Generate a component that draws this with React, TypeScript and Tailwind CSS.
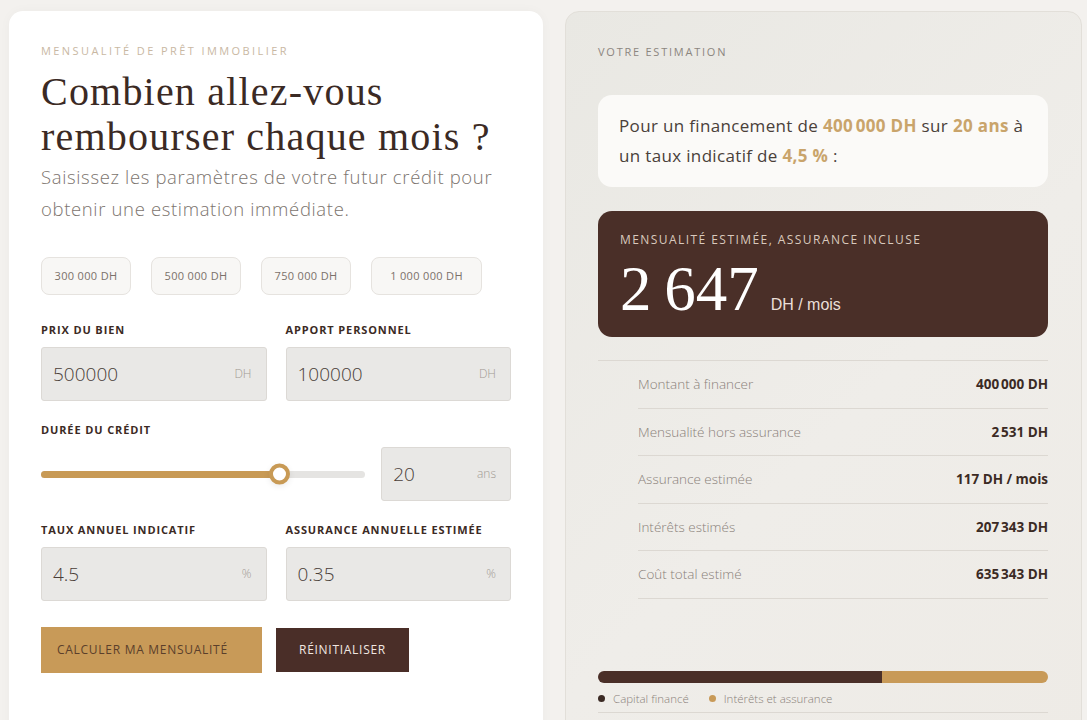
import React from "react";

const sans = "font-['Open_Sans','Noto_Sans',sans-serif]";
const serif = "font-['Liberation_Serif','DejaVu_Serif',serif]";

const chips: [string, string][] = [
  ["300 000 DH", "w-[90px]"],
  ["500 000 DH", "w-[90px]"],
  ["750 000 DH", "w-[90px]"],
  ["1 000 000 DH", "w-[111px]"],
];

const nb = "\u202f";

const rows: [string, string][] = [
  ["Montant à financer", `400${nb}000 DH`],
  ["Mensualité hors assurance", `2${nb}531 DH`],
  ["Assurance estimée", "117 DH / mois"],
  ["Intérêts estimés", `207${nb}343 DH`],
  ["Coût total estimé", `635${nb}343 DH`],
];

function Label({ children }: { children: React.ReactNode }) {
  return (
    <div className="text-[11px] font-bold tracking-[0.08em] text-[#3b2a24] leading-none mb-[12px]">
      {children}
    </div>
  );
}

function Field({ value, unit, className = "" }: { value: string; unit: string; className?: string }) {
  return (
    <div
      className={`flex h-[54px] items-center justify-between rounded-[3px] border border-[#dcd9d5] bg-[#e9e8e6] pl-[11px] pr-[14px] ${className}`}
    >
      <span className="text-[19px] font-light text-[#4a3e38]">{value}</span>
      <span className="text-[12px] font-light text-[#a29a93]">{unit}</span>
    </div>
  );
}

export default function App() {
  return (
    <div className={`${sans} h-[720px] w-[1087px] overflow-hidden bg-[#f3f1ee] pt-[11px] pl-[9px] flex gap-[22px]`}>
      {/* Formulaire */}
      <div className="w-[534px] h-[740px] shrink-0 rounded-[14px] bg-white pl-[32px] pr-[32px] pt-[34px] shadow-[0_0_12px_rgba(0,0,0,0.03)]">
        <div className="text-[11px] tracking-[0.22em] text-[#c9b8a3] leading-none">
          MENSUALITÉ DE PRÊT IMMOBILIER
        </div>
        <h1 className={`${serif} mt-[13px] text-[40px] leading-[45px] tracking-[0.03em] text-[#3b2a24]`}>
          Combien allez-vous
          <br />
          rembourser chaque mois ?
        </h1>
        <p className="mt-[2px] text-[18.5px] font-light leading-[32px] tracking-[0.035em] text-[#7c746e]">
          Saisissez les paramètres de votre futur crédit pour obtenir une estimation immédiate.
        </p>

        <div className="mt-[32px] flex gap-[20px]">
          {chips.map(([c, w]) => (
            <div
              key={c}
              className={`flex h-[38px] ${w} items-center justify-center rounded-[8px] border border-[#e6e3df] bg-[#f8f7f5] text-[11px] tracking-[0.03em] text-[#7b716a]`}
            >
              {c}
            </div>
          ))}
        </div>

        <div className="mt-[29px] grid grid-cols-2 gap-x-[19px]">
          <div>
            <Label>PRIX DU BIEN</Label>
            <Field value="500000" unit="DH" />
          </div>
          <div>
            <Label>APPORT PERSONNEL</Label>
            <Field value="100000" unit="DH" />
          </div>
        </div>

        <div className="mt-[23px]">
          <Label>DURÉE DU CRÉDIT</Label>
          <div className="flex items-center gap-[16px]">
            <div className="relative h-[7px] w-[325px] rounded-full bg-[#e5e4e2]">
              <div className="h-full w-[238px] rounded-full bg-[#c89a55]" />
              <div className="absolute left-[228px] top-1/2 h-[21px] w-[21px] -translate-y-1/2 rounded-full border-[4px] border-[#c89a55] bg-white shadow-[0_2px_6px_rgba(0,0,0,0.08)]" />
            </div>
            <Field value="20" unit="ans" className="w-[130px]" />
          </div>
        </div>

        <div className="mt-[23px] grid grid-cols-2 gap-x-[19px]">
          <div>
            <Label>TAUX ANNUEL INDICATIF</Label>
            <Field value="4.5" unit="%" />
          </div>
          <div>
            <Label>ASSURANCE ANNUELLE ESTIMÉE</Label>
            <Field value="0.35" unit="%" />
          </div>
        </div>

        <div className="mt-[26px] flex items-center gap-[14px]">
          <button className="h-[46px] w-[221px] bg-[#c89a58] pl-[16px] text-left text-[12px] tracking-[0.06em] text-[#5b3f2b]">
            CALCULER MA MENSUALITÉ
          </button>
          <button className="h-[44px] w-[133px] bg-[#4a2e28] text-[12px] tracking-[0.06em] text-[#f1e7e1]">
            RÉINITIALISER
          </button>
        </div>
      </div>

      {/* Estimation */}
      <div className="w-[517px] h-[740px] shrink-0 rounded-[14px] border border-[#e2dfd9] bg-[linear-gradient(135deg,#e9e8e3_0%,#efede9_55%,#eeebe6_100%)] pl-[32px] pr-[33px] pt-[34px]">
        <div className="text-[11px] tracking-[0.16em] text-[#8c867f] leading-none">VOTRE ESTIMATION</div>

        <div className="mt-[38px] rounded-[14px] bg-[#fbfaf8] px-[21px] py-[16px] text-[17px] leading-[30px] tracking-[0.02em] text-[#4a403a]">
          Pour un financement de <b className="font-bold text-[#c9a46b]">400{nb}000 DH</b> sur{" "}
          <b className="font-bold text-[#c9a46b]">20 ans</b> à un taux indicatif de{" "}
          <b className="font-bold text-[#c9a46b]">4,5 %</b> :
        </div>

        <div className="mt-[24px] h-[126px] rounded-[14px] bg-[#4a2f28] px-[22px] pt-[23px]">
          <div className="text-[12px] tracking-[0.12em] text-[#d9c9bd] leading-none">
            MENSUALITÉ ESTIMÉE, ASSURANCE INCLUSE
          </div>
          <div className="mt-[8px] flex items-baseline gap-[12px]">
            <span className={`${serif} text-[63px] leading-[70px] text-white`}>2{nb}647</span>
            <span className="font-['Liberation_Sans',Arial,sans-serif] text-[16px] text-[#eadfd8]">DH / mois</span>
          </div>
        </div>

        <div className="mt-[23px] border-t border-[#dcd8d2] pl-[40px]">
          {rows.map(([k, v]) => (
            <div key={k} className="flex h-[47.5px] items-center justify-between border-b border-[#dcd8d2]">
              <span className="text-[13.5px] font-light text-[#8a817a]">{k}</span>
              <span className="text-[13.5px] font-bold text-[#3b2a24]">{v}</span>
            </div>
          ))}
        </div>

        <div className="mt-[72px] flex h-[12px] overflow-hidden rounded-full">
          <div className="h-full w-[63%] bg-[#4a2f28]" />
          <div className="h-full flex-1 bg-[#c89a58]" />
        </div>
        <div className="mt-[7px] flex items-center gap-[20px] border-b border-[#dcd8d2] pb-[5px] text-[11.5px] font-light text-[#8a817a]">
          <span className="flex items-center gap-[8px]">
            <span className="h-[7px] w-[7px] rounded-full bg-[#3b2a24]" />
            Capital financé
          </span>
          <span className="flex items-center gap-[8px]">
            <span className="h-[7px] w-[7px] rounded-full bg-[#c89a58]" />
            Intérêts et assurance
          </span>
        </div>
      </div>
    </div>
  );
}
